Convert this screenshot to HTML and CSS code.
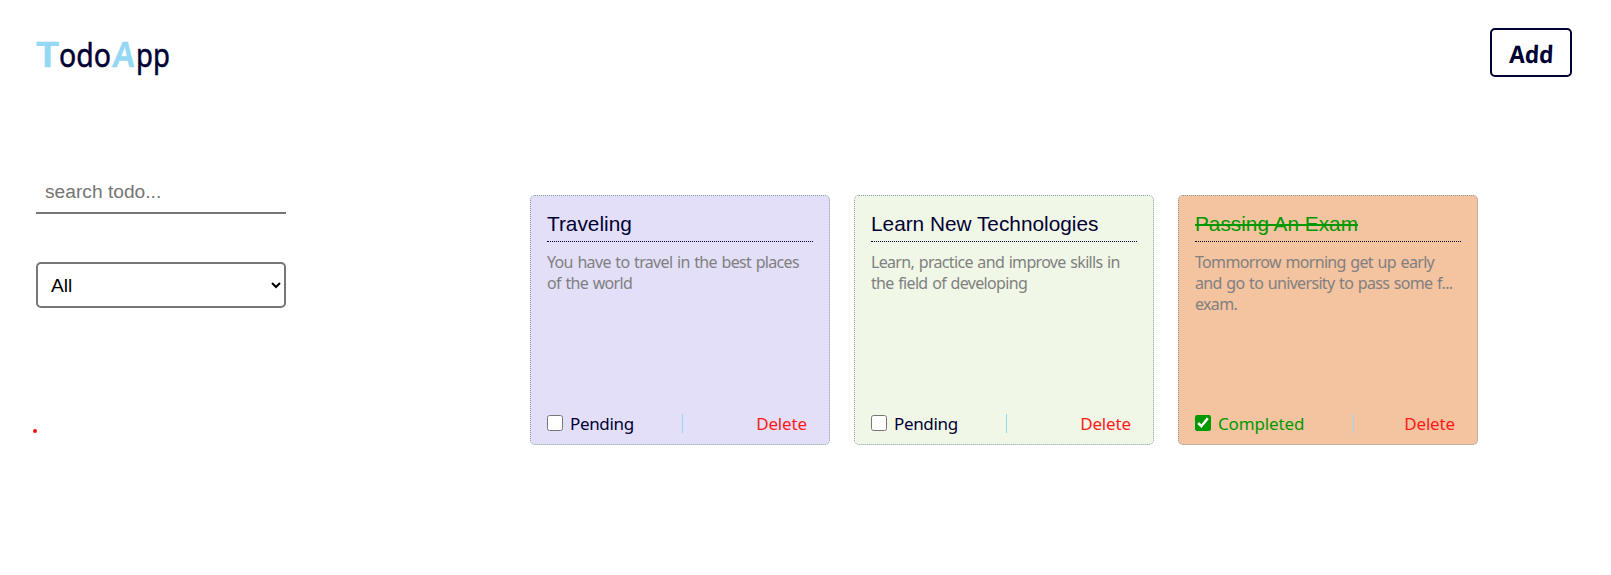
FILE: index.html
```html
<!DOCTYPE html>
<html lang="en">
<head>
<meta charset="utf-8">
<title>TodoApp</title>
<link rel="stylesheet" href="styles.css">
</head>
<body>
<header class="header">
  <h1 class="logo"><span class="cap cap-t">T</span><span class="odo">odo</span><span class="cap cap-a">A</span><span class="pp">pp</span></h1>
  <button class="add"><span class="add-label">Add</span></button>
</header>
<main class="main">
  <aside class="filters">
    <input class="search" type="text" placeholder="search todo...">
    <select class="status"><option>All</option><option>Pending</option><option>Completed</option></select>
    <span class="dot"></span>
  </aside>
  <section class="cards">
    <article class="card lavender">
      <h2 class="title">Traveling</h2>
      <p class="desc">You have to travel in the best places<br>of the world</p>
      <footer class="foot"><label class="state"><input class="check" type="checkbox">Pending</label><span class="divider"></span><span class="delete">Delete</span></footer>
    </article>
    <article class="card mint">
      <h2 class="title">Learn New Technologies</h2>
      <p class="desc">Learn, practice and improve skills in<br>the field of developing</p>
      <footer class="foot"><label class="state"><input class="check" type="checkbox">Pending</label><span class="divider"></span><span class="delete">Delete</span></footer>
    </article>
    <article class="card peach">
      <h2 class="title done">Passing An Exam</h2>
      <p class="desc">Tommorrow morning get up early<br>and go to university to pass some f...<br>exam.</p>
      <footer class="foot"><label class="state completed"><input class="check" type="checkbox" checked>Completed</label><span class="divider"></span><span class="delete">Delete</span></footer>
    </article>
  </section>
</main>
</body>
</html>
```
FILE: styles.css
```css
* { box-sizing: border-box; margin: 0; padding: 0; }
body { background: #fff; color: #000033; font-family: "Noto Sans", sans-serif; }
.header { display: flex; justify-content: space-between; align-items: flex-start; padding: 28px 39px 0 36px; height: 167px; }
.logo { display: flex; align-items: baseline; font: 400 32px/51px "Comic Sans MS", "Noto Sans", sans-serif; -webkit-text-stroke: .5px; }
.cap { color: #94d8f4; font-size: 35px; font-weight: 600; width: 23px; transform-origin: left bottom; }
.cap-t { transform: scaleX(1.16); }
.cap-a { width: 25px; transform: skewX(-5deg) scaleX(.93); }
.odo { width: 52px; transform: scaleX(.89); transform-origin: left bottom; }
.pp { width: 34px; transform: scaleX(.86); transform-origin: left bottom; }
.add { width: 82px; height: 49px; border: 2px solid #000033; border-radius: 5px; background: #fff; color: #000033; font: 700 24px/44px "Comic Sans MS", "Noto Sans", sans-serif; }
.add-label { display: inline-block; padding-top: 2px; transform: scaleX(.94) skewX(-3deg); }
.main { display: flex; padding-left: 36px; }
.filters { width: 250px; display: flex; flex-direction: column; }
.search { height: 47px; border: 0; border-bottom: 2px solid #767676; padding: 4px 9px 0; font: 19.2px "Liberation Sans", sans-serif; background: #fff; }
.search::placeholder { color: #757575; }
.status { margin-top: 48px; height: 46px; border: 2px solid #767676; border-radius: 5px; padding: 0 9px; font: 19.2px "Liberation Sans", sans-serif; background: #fff; color: #000; }
.dot { width: 4px; height: 4px; border-radius: 50%; background: #f01010; margin: 121px 0 0 -3px; }
.cards { display: flex; gap: 24px; margin: 28px 0 0 244px; }
.card { width: 300px; height: 250px; border: 1px dotted #8a9da3; border-radius: 5px; padding: 16px; display: flex; flex-direction: column; }
.lavender { background: #e3dff8; }
.mint { background: #f1f7e7; }
.peach { background: #f4c3a0; }
.title { font: 400 20.8px/24px "Liberation Sans", sans-serif; height: 30px; border-bottom: 1px dotted #000033; }
.done { color: #009900; text-decoration: line-through; }
.desc { color: #808080; font-size: 16px; line-height: 21px; margin-top: 10px; letter-spacing: -.67px; word-spacing: 1.1px; white-space: nowrap; }
.foot { display: flex; align-items: center; justify-content: space-between; height: 21px; margin-top: auto; margin-bottom: -6px; padding-right: 6px; font-size: 17px; line-height: 21px; }
.state { display: flex; align-items: center; gap: 7px; letter-spacing: -.35px; }
.check { width: 16px; height: 16px; margin-bottom: 2px; accent-color: #009900; }
.completed { color: #009900; letter-spacing: -.15px; }
.divider { width: 1px; height: 19px; margin-right: 25px; background: #94d8f4; }
.completed + .divider { margin-right: 1px; }
.delete { color: #ff1919; letter-spacing: -.15px; }
```
